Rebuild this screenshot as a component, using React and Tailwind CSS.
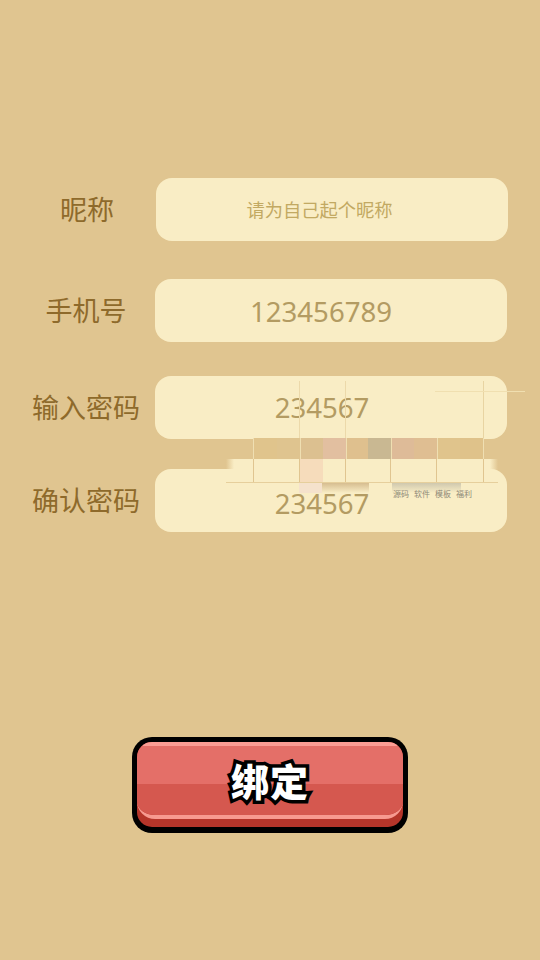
const font = { fontFamily: '"Noto Sans", "Noto Sans CJK SC", sans-serif' };

function Row({ label, value, placeholder, className, valueClass }) {
  return (
    <div className={`flex h-[63px] items-center ${className}`}>
      <div className="w-[155px] pl-[17px] text-center text-[27px] leading-none text-[#8e6a2b]">{label}</div>
      <div className="flex h-full w-[352px] items-center justify-center rounded-[16px] bg-[#f9edc5] pr-[20px]">
        {placeholder ? (
          <span className="mr-[5px] text-[18.25px] text-[#c2a962]">{placeholder}</span>
        ) : (
          <span className={`text-[27.6px] text-[#b39b62] ${valueClass}`}>{value}</span>
        )}
      </div>
    </div>
  );
}

const tints = [
  "bg-[#e0c48c]", "bg-[#dfc48f]", "bg-[#dcc090]", "bg-[#e2bfa0]", "bg-[#dfc08e]",
  "bg-[#c9b892]", "bg-[#debb98]", "bg-[#dfbe92]", "bg-[#e0c48c]", "bg-[#dfc28a]",
];
const cream = ["", "bg-[linear-gradient(90deg,#f6dcbb_50%,transparent_50%)]", "", "", ""];
const lower = [
  "", "", "bg-[#f5e2cc]", "bg-gradient-to-b from-[#d6bd90] to-transparent",
  "bg-gradient-to-b from-[#d6bd90] to-transparent", "",
  "bg-gradient-to-b from-[#cfc8ae] to-transparent", "bg-gradient-to-b from-[#cfc8ae] to-transparent",
  "bg-gradient-to-b from-[#cfc8ae] to-transparent", "",
];

function Watermark() {
  return (
    <div className="pointer-events-none absolute left-[226px] top-[381px] flex w-[272px] flex-col">
      <div className="relative ml-[27px] mr-[14px] grid h-[57px] grid-cols-5 border-r border-[#e8d4a2]">
        <div className="absolute left-[182px] top-[10px] h-px w-[90px] bg-[#f0dfb0]" />
        <div />
        <div className="border-l border-[#ecd9aa]" />
        <div className="border-l border-[#ecd9aa]" />
        <div />
        <div />
      </div>
      <div className="ml-[27px] mr-[14px] grid h-[21px] grid-cols-10 border-x border-[#efdfb2]">
        {tints.map((t, i) => (
          <div key={i} className={`${t} ${i % 2 === 0 && i > 0 ? "border-l border-[#efdfb2]" : ""}`} />
        ))}
      </div>
      <div className="border-b border-[#e6cf9c] bg-[linear-gradient(90deg,transparent,#f9edc5_8px,#f9edc5_calc(100%-8px),transparent)] pl-[27px] pr-[14px]">
        <div className="grid h-[23px] grid-cols-5 divide-x divide-[#e0c590] border-x border-[#e0c590]">
          {cream.map((c, i) => (
            <div key={i} className={c} />
          ))}
        </div>
      </div>
      <div className="ml-[27px] mr-[14px] grid h-[10px] grid-cols-10">
        {lower.map((c, i) => (
          <div key={i} className={c} />
        ))}
      </div>
      <div className="-mt-[4px] ml-[167px] flex gap-[5px] text-[8px] leading-[10px] text-[#8f8a78]">
        <span>源码</span>
        <span>软件</span>
        <span>模板</span>
        <span>福利</span>
      </div>
    </div>
  );
}

function BindButton() {
  return (
    <div className="relative mx-auto mt-[205px] h-[96px] w-[276px] rounded-[20px] bg-black p-[5px]">
      <div className="flex h-[85px] flex-col overflow-hidden rounded-[15px] bg-[#b5352a]">
        <div className="flex h-[77px] flex-col overflow-hidden rounded-b-[18px] border-t-[4px] border-b-[4px] border-t-[#fb9d94] border-b-[#f79a90]">
          <div className="h-[38px] bg-[#e46f68]" />
          <div className="flex-1 bg-[#d5584f]" />
        </div>
      </div>
      <div className="absolute inset-x-0 top-[21px] flex h-[44px] items-center justify-center">
        <span
          className="text-[38px] font-black leading-none tracking-[1px] text-white [-webkit-text-stroke:7px_#000] [paint-order:stroke_fill] [stroke-linejoin:round]"
          style={{ fontFamily: '"Noto Sans CJK SC", sans-serif' }}
        >
          绑定
        </span>
      </div>
    </div>
  );
}

export default function App() {
  return (
    <div className="relative h-[960px] w-[540px] overflow-hidden bg-[#e0c590] pt-[178px]" style={font}>
      <Row label="昵称" placeholder="请为自己起个昵称" className="ml-px" />
      <Row label="手机号" value="123456789" valueClass="pt-[2px]" className="mt-[38px]" />
      <Row label="输入密码" value="234567" valueClass="pt-[1px] ml-[2px]" className="mt-[34px]" />
      <Row label="确认密码" value="234567" valueClass="pt-[7px] ml-[2px]" className="mt-[30px]" />
      <Watermark />
      <BindButton />
    </div>
  );
}
